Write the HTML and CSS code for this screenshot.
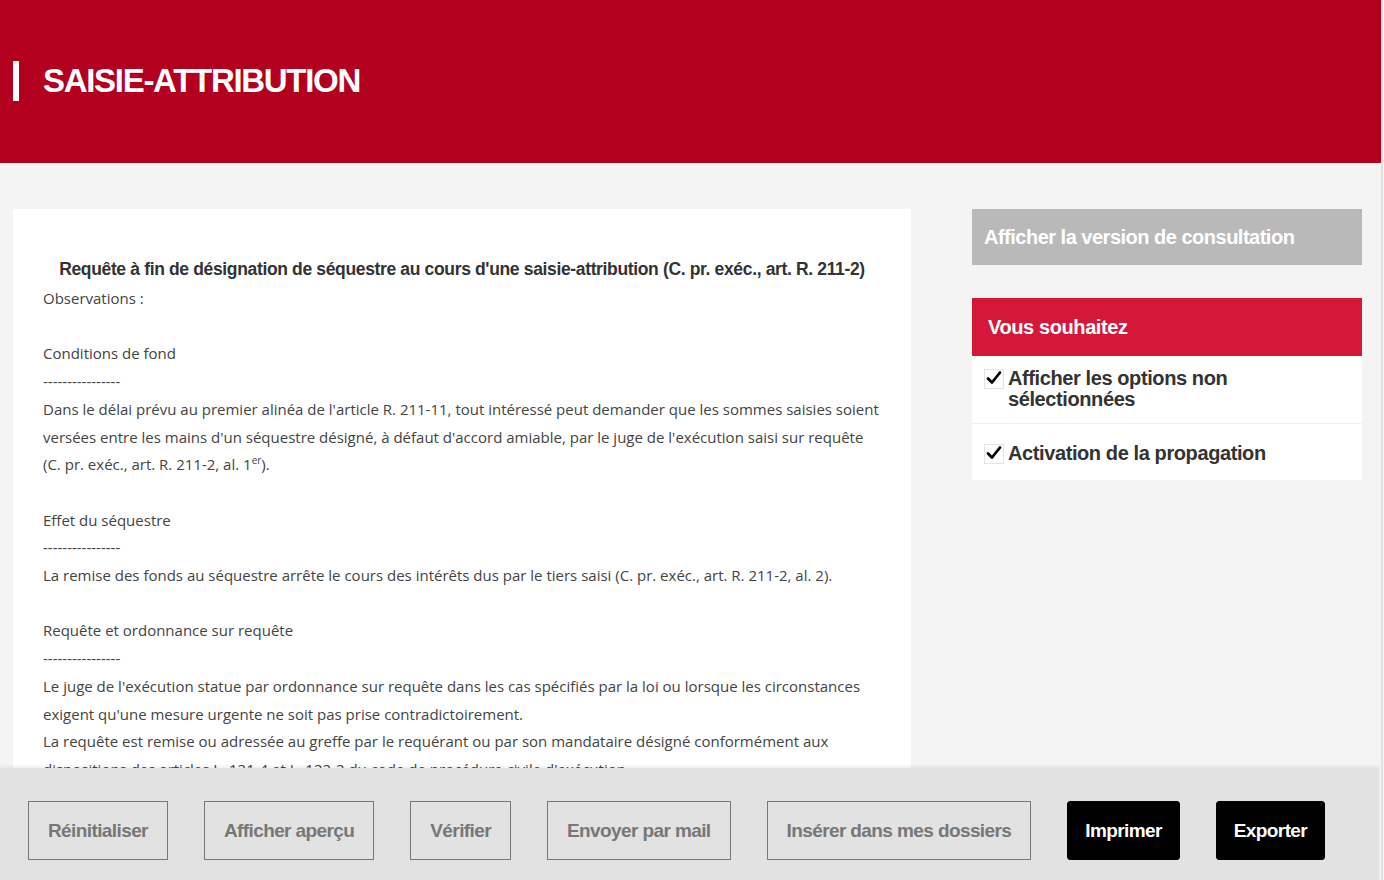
FILE: index.html
```html
<!DOCTYPE html>
<html lang="fr">
<head>
<meta charset="utf-8">
<title>Saisie-attribution</title>
<link rel="stylesheet" href="styles.css">
</head>
<body>
<div class="page">
  <header class="hero">
    <h1 class="hero-title">SAISIE-ATTRIBUTION</h1>
  </header>
  <main class="main">
    <article class="doc">
      <h2 class="doc-title">Requête à fin de désignation de séquestre au cours d'une saisie-attribution (C. pr. exéc., art. R. 211-2)</h2>
      <div class="doc-body">
        <p>Observations :</p>
        <p class="blank">&nbsp;</p>
        <p>Conditions de fond</p>
        <p>----------------</p>
        <p>Dans le délai prévu au premier alinéa de l'article R. 211-11, tout intéressé peut demander que les sommes saisies soient versées entre les mains d'un séquestre désigné, à défaut d'accord amiable, par le juge de l'exécution saisi sur requête<br>(C. pr. exéc., art. R. 211-2, al. 1<sup>er</sup>).</p>
        <p class="blank">&nbsp;</p>
        <p>Effet du séquestre</p>
        <p>----------------</p>
        <p>La remise des fonds au séquestre arrête le cours des intérêts dus par le tiers saisi (C. pr. exéc., art. R. 211-2, al. 2).</p>
        <p class="blank">&nbsp;</p>
        <p>Requête et ordonnance sur requête</p>
        <p>----------------</p>
        <p>Le juge de l'exécution statue par ordonnance sur requête dans les cas spécifiés par la loi ou lorsque les circonstances exigent qu'une mesure urgente ne soit pas prise contradictoirement.</p>
        <p>La requête est remise ou adressée au greffe par le requérant ou par son mandataire désigné conformément aux dispositions des articles L. 121-4 et L. 122-2 du code de procédure civile d'exécution.</p>
        <p>Elle est présentée en double exemplaire et doit être motivée.</p>
      </div>
    </article>
    <aside class="side">
      <button class="consult-btn" type="button">Afficher la version de consultation</button>
      <section class="wish">
        <h3 class="wish-head">Vous souhaitez</h3>
        <div class="wish-row">
          <label class="opt"><span class="box"><svg viewBox="0 0 18 18" width="18" height="18"><path d="M3 9.5 L7 13.5 L15 3.5" fill="none" stroke="#000" stroke-width="2.8" stroke-linecap="round" stroke-linejoin="round"/></svg></span><span class="opt-text">Afficher les options non sélectionnées</span></label>
        </div>
        <div class="wish-row">
          <label class="opt"><span class="box"><svg viewBox="0 0 18 18" width="18" height="18"><path d="M3 9.5 L7 13.5 L15 3.5" fill="none" stroke="#000" stroke-width="2.8" stroke-linecap="round" stroke-linejoin="round"/></svg></span><span class="opt-text">Activation de la propagation</span></label>
        </div>
      </section>
    </aside>
  </main>
  <footer class="actions">
    <button class="btn btn-outline" type="button">Réinitialiser</button>
    <button class="btn btn-outline" type="button">Afficher aperçu</button>
    <button class="btn btn-outline" type="button">Vérifier</button>
    <button class="btn btn-outline" type="button">Envoyer par mail</button>
    <button class="btn btn-outline" type="button">Insérer dans mes dossiers</button>
    <button class="btn btn-dark" type="button">Imprimer</button>
    <button class="btn btn-dark" type="button">Exporter</button>
  </footer>
</div>
</body>
</html>
```
FILE: styles.css
```css
html, body {
  margin: 0;
  padding: 0;
  height: 100%;
  overflow: hidden;
}
body {
  background: #f4f4f4;
  font-family: "Open Sans", "Liberation Sans", sans-serif;
  color: #444;
}
.page {
  width: 1381px;
  height: 880px;
  overflow: hidden;
  border-right: 2px solid #e2e2e2;
  position: relative;
}
.hero {
  background: #b2001e;
  height: 163px;
  display: flex;
  align-items: center;
  padding-left: 13px;
  padding-bottom: 1px;
  box-sizing: border-box;
}
.hero-title {
  margin: 0;
  color: #fff;
  font-family: "Liberation Sans", Arial, sans-serif;
  font-weight: 700;
  font-size: 33px;
  letter-spacing: -1.3px;
  border-left: 6px solid #fff;
  padding-left: 24px;
  line-height: 40px;
  height: 40px;
}
.main {
  display: flex;
  align-items: flex-start;
  gap: 61px;
  padding: 46px 0 0 13px;
}
.doc {
  width: 898px;
  background: #fff;
  box-sizing: border-box;
  padding: 44px 30px 200px 30px;
  min-height: 700px;
}
.doc-title {
  margin: 0;
  text-align: center;
  font-family: "Liberation Sans", Arial, sans-serif;
  font-weight: 700;
  font-size: 17.5px;
  letter-spacing: -0.35px;
  line-height: 32px;
  color: #333;
}
.doc-body {
  font-size: 15px;
  line-height: 27.7px;
  color: #444;
}
.doc-body p {
  margin: 0;
}
.doc-body sup {
  font-size: 10px;
  line-height: 0;
}
.side {
  width: 390px;
  display: flex;
  flex-direction: column;
  gap: 33px;
}
.consult-btn {
  display: block;
  width: 100%;
  height: 56px;
  border: 0;
  background: #b9b9b9;
  color: #fff;
  text-align: left;
  padding: 0 12px;
  font-family: "Liberation Sans", Arial, sans-serif;
  font-weight: 700;
  font-size: 20px;
  letter-spacing: -0.5px;
  cursor: pointer;
}
.wish {
  background: #fff;
}
.wish-head {
  margin: 0;
  background: #d51839;
  color: #fff;
  height: 58px;
  display: flex;
  align-items: center;
  padding: 0 16px;
  font-family: "Liberation Sans", Arial, sans-serif;
  font-weight: 700;
  font-size: 20px;
  letter-spacing: -0.4px;
}
.wish-row {
  min-height: 57px;
  display: flex;
  align-items: center;
  padding: 12px 13px 13px;
  box-sizing: border-box;
  border-top: 1px solid #f0f0f0;
}
.wish-row:first-of-type {
  border-top: 0;
}
.wish-row + .wish-row {
  padding-top: 15px;
}
.opt {
  display: flex;
  align-items: flex-start;
  gap: 4px;
  font-family: "Liberation Sans", Arial, sans-serif;
  font-weight: 700;
  font-size: 20px;
  letter-spacing: -0.4px;
  line-height: 21px;
  color: #333;
}
.box {
  flex: none;
  width: 18px;
  height: 18px;
  border: 1px solid #e4e4e4;
  background: #fff;
  display: flex;
  align-items: center;
  justify-content: center;
  margin-top: 1px;
  margin-left: -1px;
}
.box svg {
  flex: none;
  margin-top: -2px;
}
.opt-text {
  max-width: 260px;
}
.actions {
  position: absolute;
  left: 0;
  bottom: 0;
  width: 1379px;
  height: 112px;
  background: #e2e2e2;
  box-shadow: 0 -2px 3px rgba(0, 0, 0, 0.06);
  display: flex;
  align-items: flex-start;
  gap: 36px;
  padding: 33px 0 0 28px;
  box-sizing: border-box;
}
.btn {
  height: 59px;
  padding: 0 19px;
  font-family: "Liberation Sans", Arial, sans-serif;
  font-weight: 700;
  font-size: 19px;
  letter-spacing: -0.6px;
  cursor: pointer;
}
.btn-outline {
  background: transparent;
  border: 1px solid #777;
  color: #777;
}
.btn-dark {
  background: #000;
  border: 1px solid #000;
  color: #fff;
  border-radius: 3px;
  padding: 0 17px;
}
```
